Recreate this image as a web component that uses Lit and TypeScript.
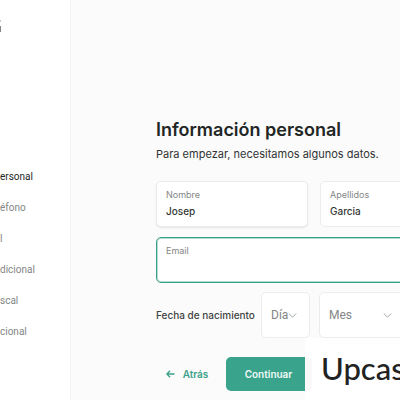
import { LitElement, html, css } from "lit";
import { customElement } from "lit/decorators.js";

const steps = ["ersonal", "éfono", "l", "dicional", "scal", "cional"];

@customElement("app-root")
export class AppRoot extends LitElement {
  static styles = css`
    :host {
      display: block;
      min-height: 100vh;
      background: #fbfbfb;
      color: #222625;
      font-family: Inter, "Liberation Sans", sans-serif;
    }
    * { box-sizing: border-box; }
    .page {
      position: relative;
      display: flex;
      min-height: 100vh;
      overflow: hidden;
    }
    .side {
      flex: none;
      width: 71px;
      background: #fff;
      border-right: 1px solid #f4f4f4;
      overflow: hidden;
    }
    .mark { display: block; margin-top: 20px; }
    .steps {
      list-style: none;
      margin: 129px 0 0;
      padding: 0;
      font-family: Roboto, "Liberation Sans", sans-serif;
    }
    .step {
      height: 31px;
      line-height: 31px;
      font-size: 10px;
      color: #838685;
      white-space: nowrap;
    }
    .step.on { color: #222625; }
    .main { flex: 1; min-width: 0; padding: 118px 0 0 85px; }
    .form { min-width: 320px; }
    h1 {
      margin: 0;
      font-size: 18px;
      line-height: 24px;
      font-weight: 600;
      white-space: nowrap;
    }
    .intro {
      margin: 4px 0 19px;
      font-size: 11px;
      line-height: 16px;
      color: #303433;
      white-space: nowrap;
    }
    .row { display: grid; grid-template-columns: 152px 1fr; gap: 12px; }
    .field {
      display: flex;
      flex-direction: column;
      height: 46px;
      padding: 6px 9px;
      background: #fff;
      border: 1px solid #ececec;
      border-radius: 5px;
      font-size: 9px;
      line-height: 14px;
      color: #838685;
    }
    .raised { box-shadow: 0 1px 2px #dfe5e3; }
    .focus { margin: 10px 0 9px; border: 1px solid #389f89; box-shadow: inset 0 0 0 1px #b5ddd3; }
    input {
      width: 100%;
      height: 18px;
      padding: 0;
      border: 0;
      outline: 0;
      background: none;
      font: 500 10px/18px Inter, sans-serif;
      color: #333736;
    }
    .birth { display: flex; align-items: center; gap: 9px; }
    .birth-label {
      font-size: 10px;
      font-weight: 500;
      color: #404443;
      width: 96px;
      white-space: nowrap;
    }
    .pick {
      position: relative;
      width: 49px;
      height: 46px;
    }
    .pick.wide { flex: 1; }
    select {
      appearance: none;
      width: 100%;
      height: 100%;
      padding: 0 9px;
      background: #fff;
      border: 1px solid #ececec;
      border-radius: 5px;
      font: 12px Roboto, sans-serif;
      color: #838685;
    }
    .chev { position: absolute; top: 20px; left: 27px; pointer-events: none; }
    .wide .chev { left: 64px; }
    .actions { display: flex; gap: 8px; margin-top: 19px; }
    button {
      display: flex;
      align-items: center;
      justify-content: center;
      gap: 8px;
      height: 34px;
      padding: 0;
      border: 0;
      border-radius: 5px;
      font: 600 10px Inter, sans-serif;
    }
    .back { width: 62px; background: none; color: #3ea18b; }
    .next { width: 85px; background: #3aa38c; color: #f1faf7; }
    .brand {
      position: absolute;
      top: 338px;
      left: 305px;
      right: 0;
      bottom: 0;
      padding: 11px 0 0 16px;
      background: #fff;
      overflow: hidden;
      font: 500 31px/38px Lato, sans-serif;
      color: #222;
      white-space: nowrap;
    }
    .brand::before {
      content: "";
      position: absolute;
      left: 0;
      top: 19px;
      width: 7px;
      height: 34px;
      background: #f9f9f9;
      border-radius: 0 5px 5px 0;
    }
  `;

  chevron() {
    return html`<svg class="chev" width="9" height="7" viewBox="0 0 9 7" fill="none" stroke="#a2a8a6">
      <path d="M.8 1.5 4.5 5.2 8.2 1.5" />
    </svg>`;
  }

  render() {
    return html`
      <div class="page">
        <aside class="side">
          <svg class="mark" width="2" height="12" viewBox="0 0 2 12">
            <path fill="#c8c8c8" d="M0 0h1v2H0z" />
            <path fill="#858585" d="M0 6h1v6H0z" />
          </svg>
          <ul class="steps">
            ${steps.map((s, i) => html`<li class="step ${i === 0 ? "on" : ""}">${s}</li>`)}
          </ul>
        </aside>
        <main class="main">
          <form class="form" @submit=${(e: Event) => e.preventDefault()}>
            <h1>Información personal</h1>
            <p class="intro">Para empezar, necesitamos algunos datos.</p>
            <div class="row">
              <label class="field raised">Nombre<input name="nombre" value="Josep" /></label>
              <label class="field">Apellidos<input name="apellidos" value="Garcia" /></label>
            </div>
            <label class="field focus">Email<input name="email" type="email" /></label>
            <div class="birth">
              <label class="birth-label" for="dia">Fecha de nacimiento</label>
              <div class="pick">
                <select id="dia"><option>Día</option></select>${this.chevron()}
              </div>
              <div class="pick wide">
                <select id="mes" aria-label="Mes"><option>Mes</option></select>${this.chevron()}
              </div>
            </div>
            <div class="actions">
              <button type="button" class="back">
                <svg width="9" height="8" viewBox="0 0 9 8" fill="none" stroke="currentColor" stroke-width="1.4">
                  <path d="M8.5 4H1M4 .8.9 4 4 7.2" />
                </svg>Atrás
              </button>
              <button class="next">Continuar</button>
            </div>
          </form>
        </main>
        <div class="brand">Upcas</div>
      </div>
    `;
  }
}
